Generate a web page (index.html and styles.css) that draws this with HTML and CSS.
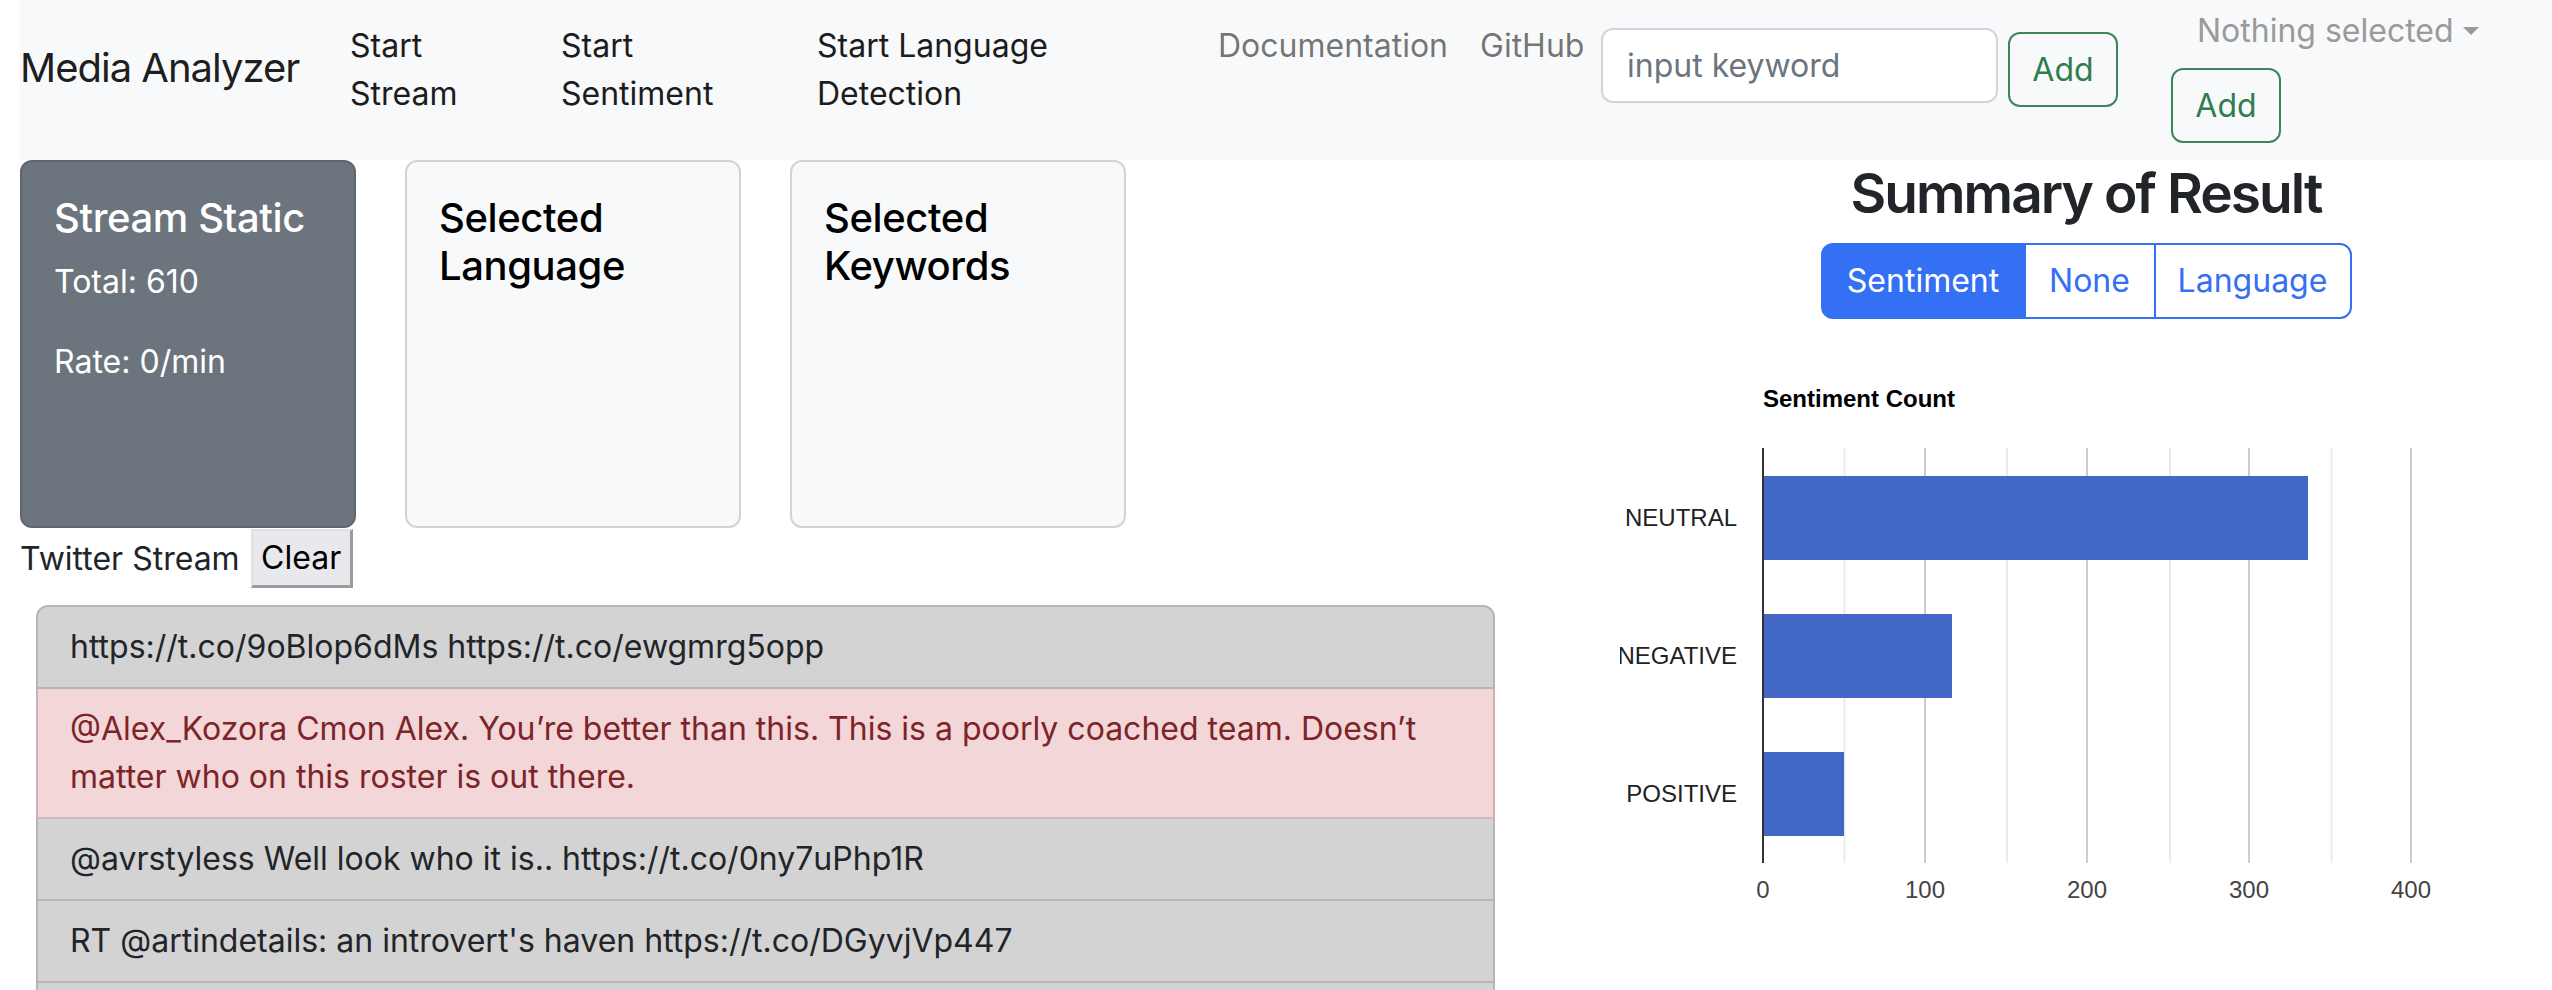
FILE: index.html
```html
<!DOCTYPE html>
<html lang="en">
<head>
<meta charset="utf-8">
<title>Media Analyzer</title>
<link rel="stylesheet" href="styles.css">
</head>
<body>
<nav class="navbar">
  <a class="brand">Media Analyzer</a>
  <a class="nav-link nav-start w1">Start<br>Stream</a>
  <a class="nav-link nav-start w2">Start<br>Sentiment</a>
  <a class="nav-link nav-start w3">Start Language<br>Detection</a>
  <a class="nav-link nav-muted w4">Documentation</a>
  <a class="nav-link nav-muted w5">GitHub</a>
  <form class="kw-form">
    <input class="kw-input" type="text" placeholder="input keyword">
    <button class="btn-add add-kw" type="button">Add</button>
  </form>
  <div class="lang-form">
    <div class="select-toggle">Nothing selected<span class="caret"></span></div>
    <button class="btn-add add-lang" type="button">Add</button>
  </div>
</nav>
<main class="main">
  <section class="left">
    <div class="cards">
      <div class="card card-dark">
        <h5 class="card-title">Stream Static</h5>
        <p class="card-text">Total: 610</p>
        <p class="card-text">Rate: 0/min</p>
      </div>
      <div class="card card-light">
        <h5 class="card-title">Selected Language</h5>
      </div>
      <div class="card card-light">
        <h5 class="card-title">Selected Keywords</h5>
      </div>
    </div>
    <div class="stream-head">
      <span class="stream-label">Twitter Stream</span>
      <button class="btn-clear" type="button">Clear</button>
    </div>
    <ul class="tweets">
      <li class="tweet">https://t.co/9oBlop6dMs https://t.co/ewgmrg5opp</li>
      <li class="tweet tweet-neg">@Alex_Kozora Cmon Alex. You’re better than this. This is a poorly coached team. Doesn’t matter who on this roster is out there.</li>
      <li class="tweet">@avrstyless Well look who it is.. https://t.co/0ny7uPhp1R</li>
      <li class="tweet">RT @artindetails: an introvert's haven https://t.co/DGyvjVp447</li>
      <li class="tweet">&nbsp;</li>
    </ul>
  </section>
  <section class="right">
    <h3 class="summary-title">Summary of Result</h3>
    <div class="seg-wrap">
      <div class="btn-group">
        <button class="seg seg-sent active" type="button">Sentiment</button>
        <button class="seg seg-none" type="button">None</button>
        <button class="seg seg-lang" type="button">Language</button>
      </div>
    </div>
    <svg class="chart" width="932" height="600" viewBox="0 0 932 600">
      <text x="143" y="88" class="c-title">Sentiment Count</text>
      <g class="grid-minor">
        <rect x="223.5" y="129" width="2" height="415"/>
        <rect x="386" y="129" width="2" height="415"/>
        <rect x="549" y="129" width="2" height="415"/>
        <rect x="710.5" y="129" width="2" height="415"/>
      </g>
      <g class="grid-major">
        <rect x="304" y="129" width="2" height="415"/>
        <rect x="466" y="129" width="2" height="415"/>
        <rect x="628" y="129" width="2" height="415"/>
        <rect x="790" y="129" width="2" height="415"/>
      </g>
      <g class="bars">
        <rect x="143" y="157" width="545" height="84"/>
        <rect x="143" y="295" width="189" height="84"/>
        <rect x="143" y="433" width="81" height="84"/>
      </g>
      <rect class="axis" x="142" y="129" width="2" height="415"/>
      <g class="c-cat">
        <text x="117" y="207">NEUTRAL</text>
        <text x="117" y="345">NEGATIVE</text>
        <text x="117" y="483">POSITIVE</text>
      </g>
      <g class="c-val">
        <text x="143" y="579">0</text>
        <text x="305" y="579">100</text>
        <text x="467" y="579">200</text>
        <text x="629" y="579">300</text>
        <text x="791" y="579">400</text>
      </g>
    </svg>
  </section>
</main>
</body>
</html>
```

FILE: styles.css
```css
* { box-sizing: border-box; }
html, body { margin: 0; }
body {
  padding-left: 20px;
  font-family: Inter, "Noto Sans", sans-serif;
  font-size: 32px;
  line-height: 48px;
  color: #212529;
  background: #fff;
  overflow: hidden;
}

/* navbar */
.navbar {
  display: flex;
  align-items: flex-start;
  height: 160px;
  background: #f8f9fa;
}
.brand {
  width: 330px;
  margin-top: 38px;
  font-size: 40px;
  line-height: 60px;
  letter-spacing: -0.025em;
  color: rgba(0, 0, 0, .9);
}
.nav-link { margin-top: 22px; }
.nav-start { color: #1c1c1c; }
.nav-muted { color: rgba(0, 0, 0, .55); }
.w1 { width: 211px; }
.w2 { width: 256px; }
.w3 { width: 401px; }
.w4 { width: 262px; }
.w5 { width: 121px; }

.kw-form {
  display: flex;
  align-items: flex-start;
  margin: 0;
}
.kw-input {
  margin-top: 28px;
  width: 397px;
  height: 75px;
  padding: 0 24px;
  border: 2px solid #d2d5da;
  border-radius: 12px;
  background: #fff;
  font: inherit;
  color: #212529;
}
.kw-input::placeholder { color: #6c757d; }
.btn-add {
  width: 110px;
  height: 75px;
  padding: 0;
  border: 2px solid #3d8659;
  border-radius: 12px;
  background: transparent;
  color: #2f7d4f;
  font: inherit;
  text-align: center;
}
.add-kw { margin-top: 32px; margin-left: 10px; }
.lang-form {
  display: flex;
  flex-direction: column;
  align-items: flex-start;
  margin-left: 53px;
}
.select-toggle {
  display: flex;
  align-items: center;
  margin-top: 7px;
  margin-left: 26px;
  color: #9a9a9a;
}
.caret {
  width: 0;
  height: 0;
  margin-left: 9px;
  border-left: 8.5px solid transparent;
  border-right: 8.5px solid transparent;
  border-top: 8px solid #9a9a9a;
}
.add-lang { margin-top: 13px; }

/* main */
.main { display: flex; }
.left { width: 1600px; flex: none; }
.right { flex: 1; text-align: center; }

.cards { display: flex; gap: 49px; }
.card {
  width: 336px;
  height: 368px;
  padding: 32px;
  border: 2px solid;
  border-radius: 12px;
}
.card-dark {
  background: #6c757d;
  border-color: #5e656c;
  color: #fff;
}
.card-light {
  background: #f8f9fa;
  border-color: #d2d3d4;
  color: #000;
}
.card-title {
  margin: 0 0 16px;
  font-size: 40px;
  line-height: 48px;
  font-weight: 500;
  letter-spacing: -0.01em;
}
.card-text { margin: 0 0 32px; }

.stream-head {
  display: flex;
  align-items: center;
  height: 59px;
  margin-top: 1px;
}
.btn-clear {
  width: 102px;
  height: 59px;
  margin-left: 11px;
  padding: 0;
  border-style: solid;
  border-width: 2px 3px 3px 2px;
  border-color: #e2e2e6 #9b9b9b #9b9b9b #e2e2e6;
  background: #e9e9ed;
  color: #000;
  font: inherit;
}

.tweets {
  width: 1459px;
  margin: 17px 0 0 16px;
  padding: 0;
  list-style: none;
}
.tweet {
  padding: 16px 32px;
  background: #d3d3d3;
  border: 2px solid #b6b6b6;
  border-top-width: 0;
  color: #212529;
}
.tweet:first-child {
  border-top-width: 2px;
  border-radius: 12px 12px 0 0;
}
.tweet-neg {
  background: #f2d6d8;
  color: #7d2429;
  border-color: #b6b6b6 #cdb1b4;
  border-bottom-color: #d5b8bb;
}

/* summary */
.summary-title {
  margin: 0 0 16px;
  font-size: 55px;
  line-height: 67px;
  font-weight: 600;
  letter-spacing: -0.035em;
  color: #212529;
}
.seg-wrap { display: flex; justify-content: center; }
.btn-group { display: flex; }
.seg {
  height: 76px;
  padding: 0;
  border: 2px solid #3470f4;
  background: #fff;
  color: #3470f4;
  font: inherit;
}
.seg-sent { width: 205px; border-radius: 12px 0 0 12px; }
.seg-none { width: 132px; margin-left: -2px; }
.seg-lang { width: 198px; margin-left: -2px; border-radius: 0 12px 12px 0; }
.seg.active { background: #3470f4; color: #fff; }

.chart { display: block; }
.c-title {
  font-family: "Liberation Sans", Arial, sans-serif;
  font-size: 24px;
  font-weight: bold;
  fill: #000;
}
.grid-minor rect { fill: #ebebeb; }
.grid-major rect { fill: #cccccc; }
.bars rect { fill: #4267c5; }
.axis { fill: #333; }
.c-cat text {
  font-family: "Liberation Sans", Arial, sans-serif;
  font-size: 24px;
  fill: #222;
  text-anchor: end;
}
.c-val text {
  font-family: "Liberation Sans", Arial, sans-serif;
  font-size: 24px;
  fill: #444;
  text-anchor: middle;
}
```
